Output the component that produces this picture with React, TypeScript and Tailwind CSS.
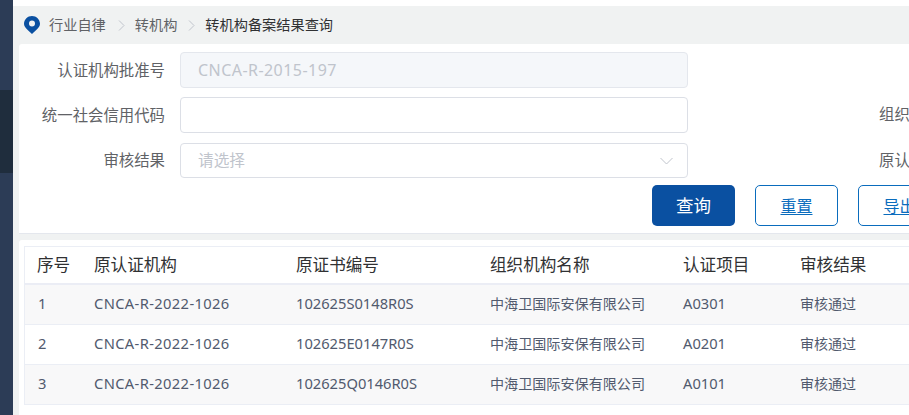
import React from 'react';

const rows = [
  { no: '1', cert: '102625S0148R0S', item: 'A0301' },
  { no: '2', cert: '102625E0147R0S', item: 'A0201' },
  { no: '3', cert: '102625Q0146R0S', item: 'A0101' },
];

const Chevron = () => (
  <svg width="7" height="11" viewBox="0 0 7 11" fill="none" stroke="#c0c4cc" strokeWidth="1">
    <path d="M1 0.5 L6 5.5 L1 10.5" />
  </svg>
);

const FormLabel = ({ children }: { children: React.ReactNode }) => (
  <div className="w-[146px] shrink-0 whitespace-nowrap pt-[1px] text-right text-[15.4px] leading-[20px] text-[#606266]">{children}</div>
);

export default function App() {
  return (
    <div
      className="flex h-[415px] w-[909px] overflow-hidden bg-white"
      style={{ fontFamily: '"Noto Sans", "Noto Sans CJK SC", sans-serif' }}
    >
      <aside className="flex w-[13px] shrink-0 flex-col bg-[#2c3c56]">
        <div className="h-[90px]" />
        <div className="h-[83px] bg-[#1f2d3d]" />
      </aside>

      <main className="flex min-w-0 flex-1 flex-col">
        <div className="h-[6px] shrink-0 bg-white" />
        <div className="flex h-[38px] shrink-0 items-center whitespace-nowrap bg-[#f0f2f2] pl-[11px] text-[14.2px]">
          <svg width="16" height="18" viewBox="0 0 16 18" className="shrink-0">
            <path
              fillRule="evenodd"
              fill="#0a50a1"
              d="M8 0 C3.6 0 0 3.4 0 7.8 C0 11.6 4.6 14.6 8 18 C11.4 14.6 16 11.6 16 7.8 C16 3.4 12.4 0 8 0 Z M8 4.6 A3 3 0 1 1 8 10.6 A3 3 0 1 1 8 4.6 Z"
            />
          </svg>
          <span className="ml-[9px] text-[#606266]">行业自律</span>
          <span className="ml-[12px] mr-[10px] flex"><Chevron /></span>
          <span className="text-[#606266]">转机构</span>
          <span className="ml-[11px] mr-[10px] flex"><Chevron /></span>
          <span className="text-[#303133]">转机构备案结果查询</span>
        </div>

        <div className="flex min-h-0 flex-1 flex-col bg-[#f0f2f2] pl-[6px]">
          <section className="h-[190px] shrink-0 rounded-tl-[3px] border-b border-[#e4e7ed] bg-white pt-[8px]">
            <div className="flex h-[36px] items-center">
              <FormLabel>认证机构批准号</FormLabel>
              <div className="ml-[15px] flex h-[36px] w-[508px] shrink-0 items-center rounded-[4px] border border-[#e4e7ed] bg-[#f5f7fa] px-[17px] text-[16px] tracking-[0.45px] text-[#c0c4cc]">
                CNCA-R-2015-197
              </div>
            </div>
            <div className="mt-[9px] flex h-[36px] items-center">
              <FormLabel>统一社会信用代码</FormLabel>
              <div className="ml-[15px] h-[36px] w-[508px] shrink-0 rounded-[4px] border border-[#dcdfe6] bg-white" />
              <div className="ml-[191px] shrink-0 whitespace-nowrap text-[15.4px] text-[#606266]">组织机构名称</div>
            </div>
            <div className="mt-[10px] flex h-[35px] items-center">
              <FormLabel>审核结果</FormLabel>
              <div className="ml-[15px] flex h-[35px] w-[508px] shrink-0 items-center justify-between rounded-[4px] border border-[#dcdfe6] bg-white pl-[17px] pr-[14px] text-[15.7px] text-[#c0c4cc]">
                请选择
                <svg width="13" height="8" viewBox="0 0 13 8" fill="none" stroke="#c0c4cc" strokeWidth="1">
                  <path d="M0.5 1 L6.5 7 L12.5 1" />
                </svg>
              </div>
              <div className="ml-[191px] shrink-0 whitespace-nowrap text-[15.4px] text-[#606266]">原认证机构</div>
            </div>
            <div className="mt-[7px] flex h-[41px] pl-[633px]">
              <button className="h-[41px] w-[83px] shrink-0 rounded-[5px] bg-[#0a50a1] text-[17.5px] text-white">查询</button>
              <button className="ml-[20px] h-[41px] w-[83px] shrink-0 rounded-[5px] border border-[#0a6cbd] bg-white text-[16px] text-[#0a6cbd] underline underline-offset-2">重置</button>
              <button className="ml-[20px] h-[41px] w-[83px] shrink-0 rounded-[5px] border border-[#0a6cbd] bg-white text-[16px] text-[#0a6cbd] underline underline-offset-2">导出</button>
            </div>
          </section>

          <div className="h-[6px] shrink-0" />

          <section className="min-h-0 flex-1 rounded-tl-[3px] bg-white pl-[5px] pt-[6px]">
            <div className="border-l border-t border-[#ebeef5]">
              <div className="flex h-[38px] items-center border-b-2 border-[#ebedf5] text-[16.6px] text-[#303133]">
                <div className="w-[69px] shrink-0 pl-[12px]">序号</div>
                <div className="w-[202px] shrink-0">原认证机构</div>
                <div className="w-[194px] shrink-0">原证书编号</div>
                <div className="w-[193px] shrink-0">组织机构名称</div>
                <div className="w-[117px] shrink-0">认证项目</div>
                <div className="flex-1 whitespace-nowrap">审核结果</div>
              </div>
              {rows.map((r, i) => (
                <div
                  key={r.no}
                  className={`flex h-[40px] items-center border-b border-[#ebeef5] pb-[2px] text-[14.7px] text-[#515a6e] ${i % 2 === 0 ? 'bg-[#f8f8f9]' : 'bg-white'}`}
                >
                  <div className="w-[69px] shrink-0 pl-[13px]">{r.no}</div>
                  <div className="w-[202px] shrink-0 tracking-[0.37px]">CNCA-R-2022-1026</div>
                  <div className="w-[194px] shrink-0">{r.cert}</div>
                  <div className="w-[193px] shrink-0 whitespace-nowrap text-[14.1px]">中海卫国际安保有限公司</div>
                  <div className="w-[117px] shrink-0">{r.item}</div>
                  <div className="flex-1 whitespace-nowrap text-[14px]">审核通过</div>
                </div>
              ))}
            </div>
          </section>
        </div>
      </main>
    </div>
  );
}
